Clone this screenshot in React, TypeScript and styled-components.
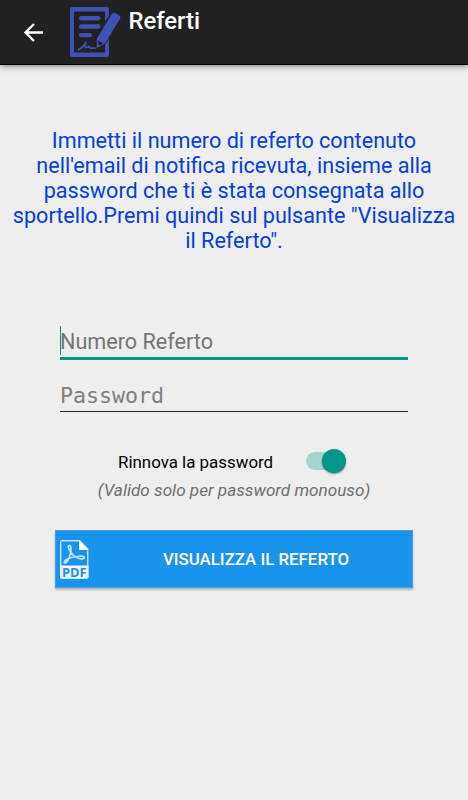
import React, { useState } from 'react';
import styled, { createGlobalStyle } from 'styled-components';

const GlobalStyle = createGlobalStyle`
  * {
    box-sizing: border-box;
  }
  body {
    margin: 0;
    background: #eeeeee;
    font-family: Roboto, sans-serif;
  }
`;

const Screen = styled.div`
  width: 468px;
  height: 800px;
  display: flex;
  flex-direction: column;
  background: #eeeeee;
  overflow: hidden;
`;

const Toolbar = styled.header`
  display: flex;
  flex: none;
  height: 65px;
  padding-left: 23px;
  background: #212121;
  border-bottom: 1px solid #000;
  box-shadow: 0 1px 6px rgba(0, 0, 0, 0.5);
`;

const BackButton = styled.button`
  width: 47px;
  padding: 0;
  border: 0;
  background: none;
  text-align: left;
  svg {
    display: block;
  }
`;

const Logo = styled.svg`
  margin-top: 7px;
`;

const Title = styled.h1`
  margin: 7px 0 0 7.5px;
  color: #fff;
  font-size: 23.8px;
  line-height: 29px;
  font-weight: 500;
`;

const Content = styled.main`
  display: flex;
  flex-direction: column;
  align-items: center;
  padding-top: 63px;
`;

const Intro = styled.p`
  width: 456px;
  margin: 0;
  color: #0540d8;
  font-size: 21.6px;
  line-height: 25px;
  text-align: center;
`;

const Form = styled.form`
  display: flex;
  flex-direction: column;
  align-items: center;
  width: 358px;
  margin-top: 72px;
`;

const Field = styled.label<{ $active?: boolean }>`
  position: relative;
  display: block;
  width: 348px;
  height: ${({ $active }) => ($active ? 35 : 52)}px;
  padding-top: ${({ $active }) => ($active ? 2 : 21)}px;
  border-bottom: ${({ $active }) => ($active ? '3px solid #0b9484' : '1px solid #2b2b2b')};
`;

const Input = styled.input<{ $mono?: boolean }>`
  display: block;
  width: 100%;
  height: 28px;
  padding: 0;
  border: 0;
  outline: 0;
  background: none;
  font-family: ${({ $mono }) => ($mono ? "'DejaVu Sans Mono', monospace" : 'Roboto, sans-serif')};
  font-size: 21.6px;
  &::placeholder {
    color: ${({ $mono }) => ($mono ? '#7e7e7e' : '#757575')};
    opacity: 1;
  }
`;

const Caret = styled.span`
  position: absolute;
  left: 0;
  top: 1px;
  width: 1px;
  height: 29px;
  background: #009688;
`;

const RenewRow = styled.div`
  display: flex;
  align-items: center;
  align-self: flex-start;
  height: 26px;
  margin: 36px 0 0 63px;
  color: #000;
  font-size: 16.9px;
  line-height: 26px;
`;

const RenewLabel = styled.span`
  width: 188px;
  padding-top: 2px;
  white-space: nowrap;
`;

const Track = styled.button<{ $on: boolean }>`
  display: flex;
  align-items: center;
  justify-content: ${({ $on }) => ($on ? 'flex-end' : 'flex-start')};
  width: 40px;
  height: 18px;
  padding: 0;
  border: 0;
  border-radius: 9px;
  background: ${({ $on }) => ($on ? '#a5d4cf' : '#b9b9b9')};
`;

const Thumb = styled.span<{ $on: boolean }>`
  flex: none;
  width: 24px;
  height: 24px;
  border-radius: 50%;
  background: ${({ $on }) => ($on ? '#009688' : '#f1f1f1')};
  box-shadow: 0 1px 2px rgba(0, 0, 0, 0.4);
`;

const Note = styled.p`
  margin: 4px 0 0;
  color: #6f6f6f;
  font-size: 17.15px;
  line-height: 24px;
  font-style: italic;
  white-space: nowrap;
`;

const SubmitButton = styled.button`
  display: flex;
  align-items: center;
  width: 358px;
  height: 58px;
  margin-top: 28px;
  padding: 0 0 0 4px;
  border: 1px solid #4a9fe6;
  background: #1994ec;
  box-shadow: 0 2px 2px rgba(0, 0, 0, 0.25);
  color: #fff;
  font-family: Roboto, sans-serif;
  font-size: 16.85px;
  font-weight: 500;
`;

const ButtonText = styled.span`
  flex: 1;
  padding-left: 11px;
  text-align: center;
`;

const PdfLabel = styled.text`
  font-family: 'Open Sans', sans-serif;
  font-size: 12.5px;
  font-weight: 700;
`;

const ReportLogo = () => (
  <Logo width="51" height="50" viewBox="0 0 51 50" fill="#3f51b5">
    <path d="M2 0H37Q39 0 39 2V9L35 14V4.500H4V45.500H35V37L39 31V48Q39 50 37 50H2Q0 50 0 48V2Q0 0 2 0Z" />
    <rect x="9" y="9" width="21.5" height="4.5" rx="2.2" />
    <rect x="9" y="17.3" width="21.5" height="4.5" rx="2.2" />
    <rect x="9" y="26" width="13" height="4.3" rx="2.1" />
    <path
      d="M26.200 41.800L26.500 31.500L41.200 7Q42.800 4.300 45.500 5.600L49.500 8Q51.500 9.600 50.300 12L35.300 36.800Z"
      stroke="#212121"
      strokeWidth=".8"
    />
    <path d="M28.300 33.300Q30.500 35.500 33 35.800L30.200 38.300L28.300 37.500Z" fill="#212121" />
    <path
      d="M8.500 43Q12.500 40.500 16 35.500Q14.500 39 15.500 40.500Q17.500 40.500 19 39.500L20.500 41.300L25 41"
      fill="none"
      stroke="#3f51b5"
      strokeWidth="1.700"
      strokeLinecap="round"
      strokeLinejoin="round"
    />
  </Logo>
);

const PdfIcon = () => (
  <svg width="29" height="39" viewBox="0 0 29 39">
    <path
      d="M2 .7H19.500L27.700 9V37Q27.700 38 26.700 38H1.700Q.7 38 .7 37V2Q.7 .7 2 .7Z"
      fill="none"
      stroke="#c6e4fb"
      strokeWidth="1.400"
    />
    <path d="M19 0L28.500 10H19Z" fill="#fff" />
    <path d="M0 25.500H28.500V37Q28.500 38.500 27 38.500H1.500Q0 38.500 0 37Z" fill="#eef7fe" />
    <path
      d="M9 5.500C7 6 9.500 11.500 13.500 15.500C17 19 24 20 24.300 17.500C24.500 15.500 16 16 10.500 17.800C6 19.300 3.300 21.800 4.500 22.800C6.500 24 10 17 10.800 12.200C11.300 8.500 11 5 9 5.500Z"
      fill="none"
      stroke="#c3e2fa"
      strokeWidth="1.700"
    />
    <PdfLabel x="2" y="36.500" fill="#1f8fdd" textLength="24.500" lengthAdjust="spacingAndGlyphs">PDF</PdfLabel>
  </svg>
);

const App: React.FC = () => {
  const [renew, setRenew] = useState(true);

  return (
    <Screen>
      <GlobalStyle />
      <Toolbar>
        <BackButton aria-label="Indietro">
          <svg width="21" height="19" viewBox="0 0 21 19" fill="none" stroke="#fff" strokeWidth="2.400">
            <path d="M20 9.500H3M11 1L2.500 9.500L11 18" />
          </svg>
        </BackButton>
        <ReportLogo />
        <Title>Referti</Title>
      </Toolbar>
      <Content>
        <Intro>
          Immetti il numero di referto contenuto nell'email di notifica ricevuta, insieme alla
          password che ti è stata consegnata allo sportello.Premi quindi sul pulsante "Visualizza
          il Referto".
        </Intro>
        <Form onSubmit={(e) => e.preventDefault()}>
          <Field $active>
            <Caret />
            <Input placeholder="Numero Referto" />
          </Field>
          <Field>
            <Input $mono type="password" placeholder="Password" />
          </Field>
          <RenewRow>
            <RenewLabel>Rinnova la password</RenewLabel>
            <Track type="button" role="switch" aria-checked={renew} $on={renew} onClick={() => setRenew(!renew)}>
              <Thumb $on={renew} />
            </Track>
          </RenewRow>
          <Note>(Valido solo per password monouso)</Note>
          <SubmitButton type="submit">
            <PdfIcon />
            <ButtonText>VISUALIZZA IL REFERTO</ButtonText>
          </SubmitButton>
        </Form>
      </Content>
    </Screen>
  );
};

export default App;
